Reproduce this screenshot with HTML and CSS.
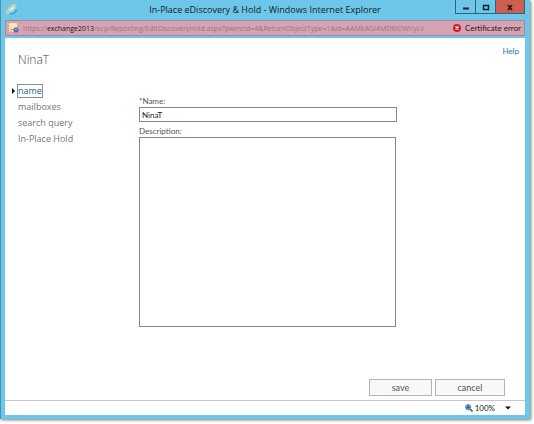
FILE: index.html
```html
<!DOCTYPE html>
<html lang="en">
<head>
<meta charset="utf-8">
<title>In-Place eDiscovery &amp; Hold</title>
<link rel="stylesheet" href="styles.css">
</head>
<body>
<div class="window">
  <header class="titlebar">
    <svg class="ie-icon" viewBox="0 0 14 14" aria-hidden="true">
      <path d="M3 11.500C1 8 5 3 10 3c2 2 2 6-1 8.500-2 1-4 1-6 0z" fill="#8fd6f3"/>
      <path d="M5 11.500c3 1 6-1 6.500-4.500" fill="none" stroke="#4aa3d6" stroke-width="2"/>
      <path d="M4.500 8.500L9 5" stroke="#d8f3f8" stroke-width="2"/>
      <path d="M2.500 12C0 9 7 2 11.500 3" fill="none" stroke="#d9cf8a" stroke-width="1.800"/>
    </svg>
    <h1 class="caption">In-Place eDiscovery &amp; Hold - Windows Internet Explorer</h1>
    <div class="controls">
      <button class="control" type="button" aria-label="Minimize"><svg viewBox="0 0 10 10"><path d="M2 6.500h6" stroke="#12222c" stroke-width="2"/></svg></button>
      <button class="control" type="button" aria-label="Maximize"><svg viewBox="0 0 10 10"><path d="M2.500 3.500h5v4h-5z" fill="none" stroke="#12222c" stroke-width="1.500"/></svg></button>
      <button class="control close" type="button" aria-label="Close"><svg viewBox="0 0 10 10"><path d="M3 3l4 5M7 3L3 8" stroke="#331512" stroke-width="1.800"/></svg></button>
    </div>
  </header>
  <div class="address">
    <svg class="page-icon" viewBox="0 0 12 12" aria-hidden="true">
      <path d="M1 1.500h8v8H1z" fill="#f4e3a4"/>
      <path d="M1 2h8" stroke="#fff5cf"/>
      <path d="M2 7.500h5" stroke="#bba66c"/>
      <circle cx="8" cy="8" r="2.500" fill="#5667a8"/>
      <path d="M7 7.500h2" stroke="#a8b6e2"/>
    </svg>
    <span class="url">https://<span class="host">exchange2013</span>/ecp/Reporting/EditDiscoveryHold.aspx?pwmcid=4&amp;ReturnObjectType=1&amp;id=AAMkAGI4MDRlOWYyLV</span>
    <span class="certificate">
      <svg class="error-icon" viewBox="0 0 8 8" aria-hidden="true"><circle cx="4" cy="4" r="4" fill="#c8202c"/><path d="M2.500 2.500l3 3M5.500 2.500l-3 3" stroke="#fff" stroke-width="1.300"/></svg>
      Certificate error
    </span>
  </div>
  <div class="page">
    <a class="help" href="#">Help</a>
    <h2 class="heading">NinaT</h2>
    <div class="columns">
      <nav class="nav">
        <a class="link current" href="#"><span class="focus">name</span></a>
        <a class="link" href="#">mailboxes</a>
        <a class="link" href="#">search query</a>
        <a class="link" href="#">In-Place Hold</a>
      </nav>
      <form class="form" id="hold">
        <label class="label" for="name">*Name:</label>
        <input class="field" id="name" type="text" value="NinaT">
        <label class="label" for="description">Description:</label>
        <textarea class="field area" id="description"></textarea>
      </form>
    </div>
    <div class="actions">
      <button class="button" type="submit" form="hold">save</button>
      <button class="button wide" type="button">cancel</button>
    </div>
  </div>
  <footer class="status">
    <button class="zoom" type="button">
      <svg class="zoom-icon" viewBox="0 0 8 8" aria-hidden="true"><path d="M5 5l2.500 2.500" stroke="#3e4c66" stroke-width="1.500"/><circle cx="3.200" cy="3.200" r="2.700" fill="#79a5dc" stroke="#5c83b8" stroke-width=".8"/><path d="M3.200 1.500v3.400M1.500 3.200h3.400" stroke="#214b94"/></svg>
      <span>100%</span>
      <svg class="caret" viewBox="0 0 6 4" aria-hidden="true"><path d="M0 .5h6L3 3.500z" fill="#111"/></svg>
    </button>
  </footer>
</div>
</body>
</html>
```
FILE: styles.css
```css
* { box-sizing: border-box; }

body {
  margin: 0;
  min-height: 100vh;
  padding: 0 4px 5px 0;
  display: flex;
  background: #fff;
  font-family: Lato, "Noto Sans", sans-serif;
  font-size: 8px;
  color: #555;
}

button, input, textarea { font: inherit; color: inherit; }
h1, h2 { margin: 0; font-weight: 400; }
a { text-decoration: none; }
svg { display: block; flex: none; }

.caption, .url, .heading, .nav { font-family: "Open Sans", "Noto Sans", sans-serif; }

.window {
  flex: 1;
  min-width: 0;
  display: flex;
  flex-direction: column;
  padding: 0 5px 4px 4px;
  background: #6ec6e8;
  border-left: 1px solid #4b91b0;
  box-shadow: 1px 1px 3px #777;
}

.titlebar {
  display: grid;
  grid-template-columns: 1fr auto 1fr;
  align-items: start;
  height: 20px;
}

.ie-icon { width: 14px; height: 14px; margin-top: 2px; }
.caption { font-size: 9px; line-height: 20px; color: #10232e; }
.controls { display: flex; justify-self: end; }

.control {
  width: 20px;
  height: 14px;
  padding: 0;
  display: grid;
  place-items: center;
  background: #6ec6e8;
  border: 1px solid #286581;
  border-width: 0 0 1px 1px;
}
.control svg { width: 10px; height: 10px; }
.control.close { width: 30px; background: #cb6052; border-right-width: 1px; }

.address {
  display: flex;
  align-items: center;
  gap: 3px;
  height: 16px;
  margin-bottom: 2px;
  padding: 0 3px 0 2px;
  background: #d5a3b4;
  border: 1px solid #a5899c;
  color: #98737f;
}
.page-icon { width: 12px; height: 12px; }
.url { flex: 1; min-width: 0; overflow: hidden; white-space: nowrap; font-size: 7px; }
.host { color: #25171c; }
.certificate { display: flex; align-items: center; gap: 4px; white-space: nowrap; color: #25171c; }
.error-icon { width: 8px; height: 8px; }

.page {
  flex: 1;
  display: flex;
  flex-direction: column;
  padding: 7px 20px 4px 13px;
  background: #fff;
}
.help { align-self: flex-end; margin-right: -14px; line-height: 12px; color: #2a7ba8; }
.heading { margin-top: -5px; font-size: 12px; line-height: 16px; font-weight: 300; color: #444; }

.columns { display: flex; margin-top: 15px; }
.nav { flex: none; width: 121px; display: flex; flex-direction: column; font-size: 9px; line-height: 16px; }
.link { color: #777; }
.link.current { position: relative; color: #17699c; }
.current::before {
  content: "";
  position: absolute;
  left: -6px;
  top: 5px;
  border: 3px solid transparent;
  border-left-color: #111;
  border-right-width: 0;
}
.focus { display: inline-block; line-height: 12px; outline: 1px solid #8a9095; }

.form { flex: 0 1 258px; display: flex; flex-direction: column; padding-top: 12px; }
.label { line-height: 12px; }
.field {
  width: 100%;
  height: 15px;
  margin: 0 0 3px;
  padding: 0 2px;
  border: 1px solid #888;
  border-radius: 0;
  background: #fff;
  color: #222;
  outline: 0;
}
.area { width: calc(100% - 1px); height: 190px; margin: 0; resize: none; }

.actions { display: flex; justify-content: flex-end; gap: 3px; margin-top: auto; }
.button {
  width: 63px;
  height: 17px;
  padding: 0;
  background: #f8f8f8;
  border: 1px solid #b4b4b4;
  font-size: 9px;
  line-height: 12px;
}
.button.wide { width: 70px; }

.status {
  display: flex;
  justify-content: flex-end;
  height: 15px;
  padding-right: 14px;
  background: #fff;
  border-top: 1px solid #c9c9c9;
}
.zoom {
  display: flex;
  align-items: center;
  gap: 2px;
  padding: 0;
  border: 0;
  background: none;
  color: #222;
}
.zoom-icon { width: 8px; height: 8px; }
.caret { width: 6px; height: 4px; margin-left: 8px; }
```
